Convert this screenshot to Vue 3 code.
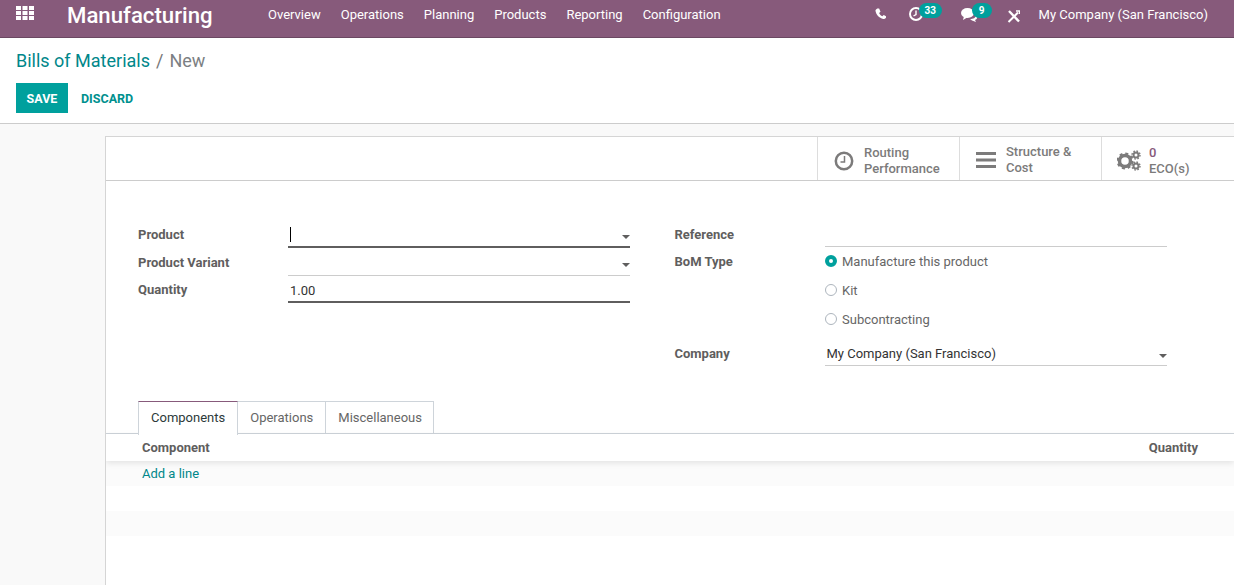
<script setup>
const menus = ["Overview", "Operations", "Planning", "Products", "Reporting", "Configuration"];
const leftFields = [
  { label: "Product", value: "", caret: true, focus: true, cursor: true },
  { label: "Product Variant", value: "", caret: true },
  { label: "Quantity", value: "1.00", focus: true },
];
const radios = [
  { label: "Manufacture this product", checked: true },
  { label: "Kit" },
  { label: "Subcontracting" },
];
const tabs = ["Components", "Operations", "Miscellaneous"];
</script>

<template>
  <div class="page">
    <header class="navbar">
      <svg class="apps" width="18" height="14" viewBox="0 0 18 14" fill="#fff">
        <rect x="0" y="0" width="5" height="4" /><rect x="6.5" y="0" width="5" height="4" /><rect x="13" y="0" width="5" height="4" />
        <rect x="0" y="5" width="5" height="4" /><rect x="6.5" y="5" width="5" height="4" /><rect x="13" y="5" width="5" height="4" />
        <rect x="0" y="10" width="5" height="4" /><rect x="6.5" y="10" width="5" height="4" /><rect x="13" y="10" width="5" height="4" />
      </svg>
      <span class="brand">Manufacturing</span>
      <nav class="menu">
        <a v-for="m in menus" :key="m">{{ m }}</a>
      </nav>
      <div class="systray">
        <svg class="phone" width="11" height="11" viewBox="0 0 24 24" fill="#fff">
          <path d="M5 1 L9 1 L12 8 L9 11 C10 14 13 17 16 18 L19 15 L24 18 L24 21 C23 23 20 24 18 24 C9 22 2 14 1 6 C1 4 3 2 5 1 Z" />
        </svg>
        <span class="tray-item activity">
          <svg width="16" height="16" viewBox="0 0 16 16" fill="none" stroke="#fff">
            <circle cx="8" cy="8" r="6" stroke-width="2" />
            <path d="M8 4.500 V8.500 L5.500 10" stroke-width="1.400" />
          </svg>
          <b class="badge">33</b>
        </span>
        <span class="tray-item chat">
          <svg width="17" height="15" viewBox="0 0 17 15" fill="#fff">
            <ellipse cx="6.500" cy="6" rx="6.500" ry="5" />
            <path d="M3 9 L2 13 L7 10 Z" />
            <path d="M9 12 C12 12 15 11 15 8 C16.500 9 17 12 14 13 L15 15 L11 13.500 Z" />
          </svg>
          <b class="badge">9</b>
        </span>
        <svg class="tools" width="13" height="13" viewBox="0 0 13 13" fill="none" stroke="#fff">
          <path d="M1.500 12 L11 2.500" stroke-width="2" />
          <path d="M2 1 L12 11.500" stroke-width="2.400" />
          <path d="M9 1 L12.500 1 L12.500 4" stroke-width="1.500" />
        </svg>
        <span class="company">My Company (San Francisco)</span>
      </div>
    </header>

    <section class="control-panel">
      <div class="breadcrumb">
        <a>Bills of Materials</a>
        <span class="sep">/</span>
        <span class="current">New</span>
      </div>
      <div class="actions">
        <button class="save">SAVE</button>
        <button class="discard">DISCARD</button>
      </div>
    </section>

    <main class="content">
      <div class="sheet">
        <div class="button-box">
          <div class="stat">
            <svg width="20" height="20" viewBox="0 0 20 20" fill="none" stroke="#7c7b7b">
              <circle cx="10" cy="10" r="8.200" stroke-width="2.500" />
              <path d="M10.500 5 V11 H6.500" stroke-width="1.500" />
            </svg>
            <span class="stat-text">Routing<br />Performance</span>
          </div>
          <div class="stat">
            <svg width="20" height="17" viewBox="0 0 20 17" fill="#7c7b7b">
              <rect y="0" width="20" height="3" /><rect y="6.500" width="20" height="3" /><rect y="13" width="20" height="3" />
            </svg>
            <span class="stat-text two-up">Structure &amp;<br />Cost</span>
          </div>
          <div class="stat">
            <svg class="gears" width="24" height="21" viewBox="0 0 24 21" fill="#7c7b7b">
              <circle cx="8" cy="11" r="5.500" fill="none" stroke="#7c7b7b" stroke-width="3.500" />
              <circle cx="8" cy="11" r="7.500" fill="none" stroke="#7c7b7b" stroke-width="2" stroke-dasharray="3 2.900" />
              <circle cx="19" cy="5" r="2.500" fill="none" stroke="#7c7b7b" stroke-width="2" />
              <circle cx="19" cy="5" r="4" fill="none" stroke="#7c7b7b" stroke-width="1.400" stroke-dasharray="1.600 1.540" />
              <circle cx="19" cy="16" r="2.500" fill="none" stroke="#7c7b7b" stroke-width="2" />
              <circle cx="19" cy="16" r="4" fill="none" stroke="#7c7b7b" stroke-width="1.400" stroke-dasharray="1.600 1.540" />
            </svg>
            <span class="stat-text"><em>0</em><br />ECO(s)</span>
          </div>
        </div>

        <div class="form">
          <div class="col">
            <div v-for="f in leftFields" :key="f.label" class="row">
              <label>{{ f.label }}</label>
              <div class="input" :class="{ focus: f.focus }">
                <i v-if="f.cursor" class="cursor"></i>
                <span>{{ f.value }}</span>
                <i v-if="f.caret" class="caret"></i>
              </div>
            </div>
          </div>
          <div class="col right">
            <div class="row first-row">
              <label>Reference</label>
              <div class="input"></div>
            </div>
            <div class="row radio-row">
              <label>BoM Type</label>
              <div class="radios">
                <div v-for="r in radios" :key="r.label" class="radio" :class="{ checked: r.checked }">
                  <i></i>{{ r.label }}
                </div>
              </div>
            </div>
            <div class="row company-row">
              <label>Company</label>
              <div class="input">
                <span>My Company (San Francisco)</span>
                <i class="caret"></i>
              </div>
            </div>
          </div>
        </div>

        <div class="tabs">
          <a v-for="(t, i) in tabs" :key="t" class="tab" :class="{ active: i === 0 }">{{ t }}</a>
        </div>
        <div class="table-head">
          <span>Component</span>
          <span>Quantity</span>
        </div>
        <div class="table-row striped"><a>Add a line</a></div>
        <div class="table-row"></div>
        <div class="table-row striped"></div>
      </div>
    </main>
  </div>
</template>

<style>
html,
body {
  margin: 0;
  overflow: hidden;
}
</style>

<style scoped>
.page {
  width: 1234px;
  height: 585px;
  display: flex;
  flex-direction: column;
  overflow: hidden;
  font-family: Roboto, "Noto Sans", sans-serif;
  font-size: 13px;
  color: #4c4c4c;
  background: #fff;
}
.navbar {
  height: 29px;
  padding-bottom: 8px;
  flex: none;
  display: flex;
  align-items: center;
  background: #875a7b;
  border-bottom: 1px solid #6b4862;
  color: #fff;
}
.apps {
  margin: 0 0 3px 16px;
}
.brand {
  margin-left: 33px;
  font-size: 22.200px;
  font-weight: 500;
  width: 201px;
  white-space: nowrap;
}
.menu {
  display: flex;
  gap: 20px;
}
.menu a {
  font-size: 13px;
  white-space: nowrap;
}
.systray {
  margin-left: auto;
  display: flex;
  align-items: center;
  padding-right: 26px;
}
.phone {
  margin-bottom: 2px;
}
.tray-item {
  position: relative;
  display: flex;
}
.activity {
  margin: 0 0 2px 22px;
}
.chat {
  margin: 0 0 1px 37px;
}
.badge {
  position: absolute;
  top: -3px;
  left: 11px;
  height: 15px;
  min-width: 20px;
  box-sizing: border-box;
  padding: 0 6px;
  line-height: 15px;
  border-radius: 8px;
  background: #00a09d;
  font-size: 10px;
  font-weight: 700;
  text-align: center;
}
.chat .badge {
  top: -4px;
}
.tools {
  margin: 3px 0 0 29px;
}
.company {
  margin-left: 19px;
  white-space: nowrap;
}
.control-panel {
  height: 86px;
  flex: none;
  box-sizing: border-box;
  padding: 11px 16px 0;
  background: #fff;
  border-bottom: 1px solid #ccc;
}
.breadcrumb {
  display: flex;
  gap: 6px;
  font-size: 18px;
  line-height: 24px;
}
.breadcrumb a {
  color: #00878a;
}
.sep {
  color: #777;
}
.current {
  color: #7c7f83;
}
.actions {
  display: flex;
  margin-top: 10px;
}
.actions button {
  height: 30px;
  border: 0;
  font: 700 12.500px Roboto, sans-serif;
  padding: 0;
}
.save {
  width: 52px;
  background: #00a09d;
  color: #fff;
}
.discard {
  margin-left: 13px;
  background: none;
  color: #00908e !important;
}
.content {
  flex: 1;
  background: #f9f9f9;
  padding: 12px 0 0 105px;
}
.sheet {
  height: 100%;
  box-sizing: border-box;
  background: #fff;
  border: 1px solid #d5d5d5;
  border-right: 0;
  border-bottom: 0;
  overflow: hidden;
}
.button-box {
  height: 43px;
  display: flex;
  padding-left: 711px;
  border-bottom: 1px solid #ccc;
}
.stat {
  flex: none;
  width: 142px;
  box-sizing: border-box;
  display: flex;
  align-items: center;
  gap: 10px;
  padding: 4px 0 0 16px;
  border-left: 1px solid #ddd;
  color: #7c7b7b;
  font-size: 13px;
  font-weight: 500;
  line-height: 15.500px;
}
.stat-text {
  white-space: nowrap;
}
.two-up {
  margin-bottom: 2px;
}
.gears {
  margin: 0 -2px 0 -1px;
}
.stat em {
  font-style: normal;
  color: #875a7b;
}
.form {
  display: flex;
  gap: 44.500px;
  padding: 44px 0 0 32px;
  height: 175px;
}
.col {
  width: 492px;
  flex: none;
}
.row {
  display: flex;
  min-height: 27.500px;
}
.first-row {
  min-height: 25.500px;
}
.row label {
  width: 150px;
  flex: none;
  font-weight: 700;
  color: #5f5e5e;
  line-height: 18px;
  padding-top: 1px;
}
.input {
  flex: 1;
  position: relative;
  height: 23px;
  display: flex;
  align-items: flex-end;
  padding: 0 2px 2px;
  box-sizing: border-box;
  border-bottom: 1px solid #ccc;
  line-height: 18px;
  color: #333;
}
.right .input {
  height: 22px;
}
.input.focus {
  border-bottom: 2px solid #5f5e5e;
  padding-bottom: 1px;
}
.caret {
  position: absolute;
  right: 0;
  top: 10px;
  border: 4px solid transparent;
  border-top-color: #5f5e5e;
  border-bottom: 0;
}
.cursor {
  position: absolute;
  left: 2px;
  top: 2px;
  width: 1px;
  height: 15px;
  background: #000;
}
.radio-row {
  min-height: 91px;
  padding-top: 1px;
}
.radios {
  display: flex;
  flex-direction: column;
  gap: 11px;
  padding-top: 1px;
}
.radio {
  display: flex;
  align-items: center;
  gap: 5.500px;
  line-height: 18px;
  color: #666;
}
.radio i {
  width: 12px;
  height: 12px;
  border-radius: 50%;
  border: 1px solid #adb5bd;
  background: #fff;
  box-sizing: border-box;
  margin-top: -1px;
}
.radio.checked i {
  border: 4px solid #00a09d;
}
.company-row {
  padding-top: 1px;
}
.tabs {
  display: flex;
  padding-left: 32px;
  height: 32px;
  border-bottom: 1px solid #ced4da;
  margin-top: 1px;
}
.tab {
  height: 32px;
  line-height: 32px;
  padding: 0 12px;
  border: 1px solid #ced4da;
  border-left: 0;
  border-bottom: 0;
  color: #666;
}
.tab:last-child {
  padding-right: 11px;
}
.tab.active {
  border-left: 1px solid #ced4da;
  border-top: 1px solid #875a7b;
  color: #2c3a3a;
  background: #fff;
  height: 33px;
  position: relative;
  z-index: 1;
  margin-bottom: -1px;
}
.table-head {
  display: flex;
  justify-content: space-between;
  height: 27px;
  line-height: 27px;
  padding: 0 36px;
  font-weight: 700;
  color: #5f5e5e;
  box-shadow: 0 2px 6px rgba(0, 0, 0, 0.1);
  position: relative;
}
.table-row {
  height: 25px;
  line-height: 25px;
  padding-left: 36px;
}
.table-row.striped {
  background: #fbfbfb;
}
.table-row a {
  color: #00878a;
}
</style>
